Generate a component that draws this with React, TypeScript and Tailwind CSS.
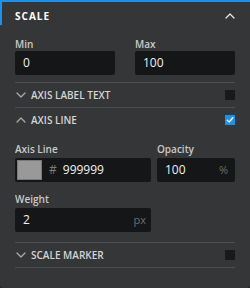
import React from "react";

const Chevron = ({ up, className }: { up?: boolean; className?: string }) => (
  <svg width="10" height="6" viewBox="0 0 10 6" className={className} fill="none">
    <polyline
      points={up ? "1,5 5,1 9,5" : "1,1 5,5 9,1"}
      stroke="currentColor"
      strokeWidth="1.3"
      strokeLinecap="round"
      strokeLinejoin="round"
    />
  </svg>
);

const Box = ({ checked }: { checked?: boolean }) =>
  checked ? (
    <div className="w-[10px] h-[10px] bg-[#1891f0] flex items-center justify-center">
      <svg width="8" height="8" viewBox="0 0 8 8" fill="none">
        <polyline points="1.2,4.2 3.2,6 6.8,1.8" stroke="white" strokeWidth="1.4" strokeLinecap="round" strokeLinejoin="round" />
      </svg>
    </div>
  ) : (
    <div className="w-[10px] h-[10px] bg-[#19191a]" />
  );

const Label = ({ children }: { children: React.ReactNode }) => (
  <div className="h-[14px] leading-[14px] text-[10px] font-semibold text-[#cacaca]">{children}</div>
);

const Row = ({ title, up, checked }: { title: string; up?: boolean; checked?: boolean }) => (
  <div className="h-[24px] flex items-center justify-between">
    <div className="flex items-center">
      <Chevron up={up} className="text-[#a9a9a9] ml-[1px] mr-[5px]" />
      <span className="text-[10px] font-semibold text-[#d4d4d4] leading-[14px]">{title}</span>
    </div>
    <Box checked={checked} />
  </div>
);

const Divider = () => <div className="h-px bg-[#4d4e50]" />;

export default function App() {
  return (
    <div
      className="w-[250px] h-[288px] bg-[#262627]"
      style={{ fontFamily: '"Open Sans", "Noto Sans", sans-serif' }}
    >
      <div className="h-full bg-[#353638] rounded-b-[4px] border-t-2 border-[#1891f0] flex flex-col">
        <div className="h-[23px] border-l-2 border-[#1891f0] flex items-center justify-between pl-[13px] pr-[15px] pt-[4px]">
          <span className="text-[10px] font-bold tracking-[1px] text-white leading-[14px]">SCALE</span>
          <Chevron up className="text-[#e6e6e6]" />
        </div>
        <div className="px-[15px] flex flex-col">
          <div className="grid grid-cols-2 gap-x-[20px] mt-[12px]">
            <div className="flex flex-col">
              <Label>Min</Label>
              <div className="h-[24px] bg-[#151618] rounded-[2px] flex items-center px-[8px] text-[12px] text-[#f2f2f2]">0</div>
            </div>
            <div className="flex flex-col">
              <Label>Max</Label>
              <div className="h-[24px] bg-[#151618] rounded-[2px] flex items-center px-[8px] text-[12px] text-[#f2f2f2]">100</div>
            </div>
          </div>
          <div className="mt-[7px]">
            <Divider />
          </div>
          <Row title="AXIS LABEL TEXT" />
          <Divider />
          <Row title="AXIS LINE" up checked />
          <div className="flex gap-x-[6px] mt-[10px]">
            <div className="w-[136px] flex flex-col">
              <Label>Axis Line</Label>
              <div className="mt-[2px] h-[24px] bg-[#151618] rounded-[2px] flex items-center pl-[2px] text-[12px]">
                <div className="w-[25px] h-[20px] bg-[#999999] border border-[#7a7a7a]" />
                <span className="ml-[7px] text-[#7c7c7c]">#</span>
                <span className="ml-[6px] text-[#f2f2f2]">999999</span>
              </div>
            </div>
            <div className="flex-1 flex flex-col">
              <Label>Opacity</Label>
              <div className="mt-[2px] h-[24px] bg-[#151618] rounded-[2px] flex items-center justify-between pl-[8px] pr-[7px] text-[12px]">
                <span className="text-[#f2f2f2]">100</span>
                <span className="text-[#6e6e6e] text-[11px]">%</span>
              </div>
            </div>
          </div>
          <div className="w-[136px] flex flex-col mt-[10px]">
            <Label>Weight</Label>
            <div className="mt-[2px] h-[24px] bg-[#151618] rounded-[2px] flex items-center justify-between pl-[8px] pr-[5px] text-[12px]">
              <span className="text-[#f2f2f2]">2</span>
              <span className="text-[#6e6e6e] text-[11px]">px</span>
            </div>
          </div>
          <div className="mt-[10px]">
            <Divider />
          </div>
          <Row title="SCALE MARKER" />
          <Divider />
        </div>
      </div>
    </div>
  );
}
